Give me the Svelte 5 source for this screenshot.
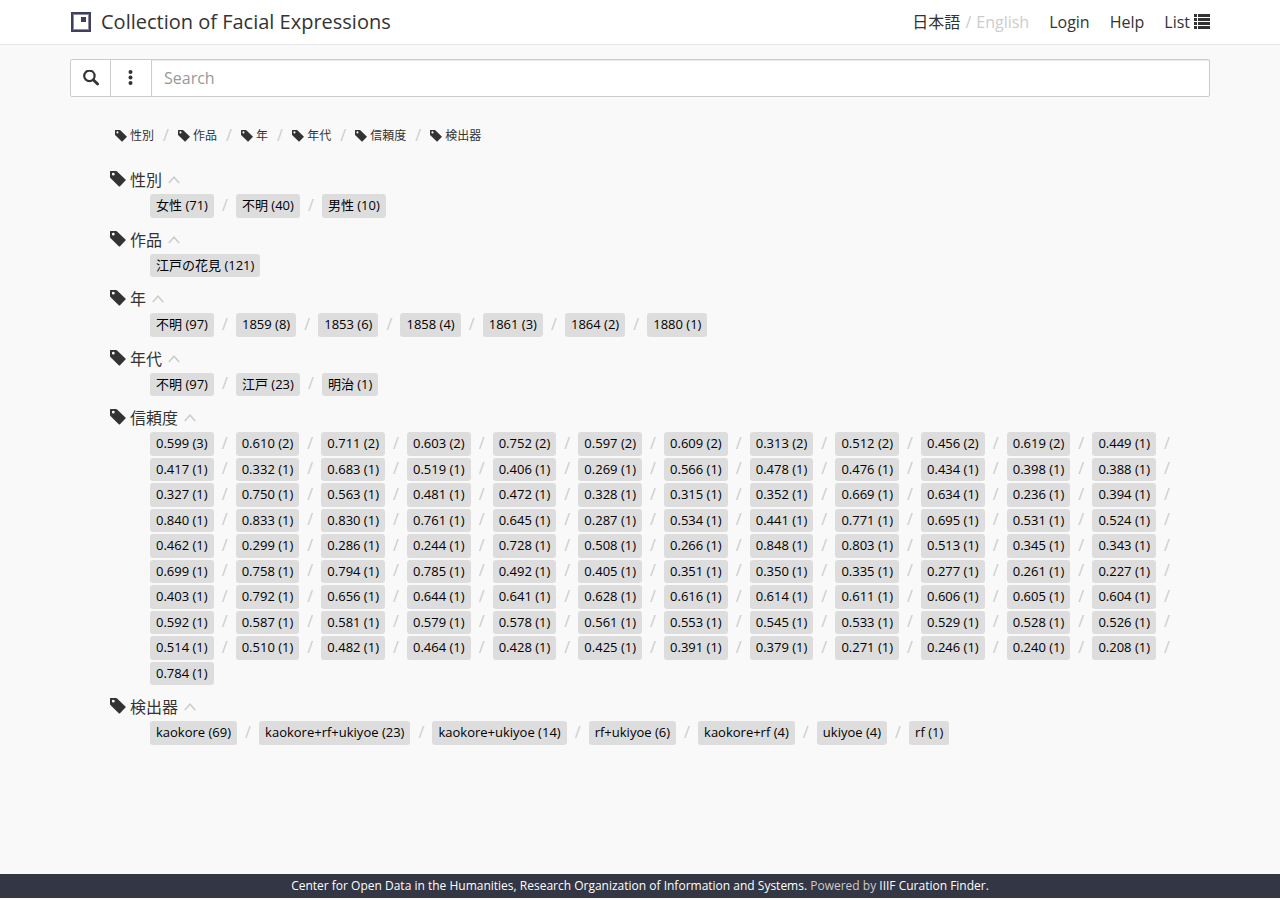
<script lang="ts">
	type Facet = { label: string; values: [string, number][] };

	let keyword = $state('');
	let closed = $state<Record<string, boolean>>({});

	const single = (list: string): [string, number][] => list.split(' ').map((value) => [value, 1]);

	const facets: Facet[] = [
		{ label: '性別', values: [['女性', 71], ['不明', 40], ['男性', 10]] },
		{ label: '作品', values: [['江戸の花見', 121]] },
		{
			label: '年',
			values: [['不明', 97], ['1859', 8], ['1853', 6], ['1858', 4], ['1861', 3], ['1864', 2], ['1880', 1]]
		},
		{ label: '年代', values: [['不明', 97], ['江戸', 23], ['明治', 1]] },
		{
			label: '信頼度',
			values: [
				['0.599', 3], ['0.610', 2], ['0.711', 2], ['0.603', 2], ['0.752', 2], ['0.597', 2],
				['0.609', 2], ['0.313', 2], ['0.512', 2], ['0.456', 2], ['0.619', 2],
				...single('0.449 0.417 0.332 0.683 0.519 0.406 0.269 0.566 0.478 0.476 0.434 0.398 0.388'),
				...single('0.327 0.750 0.563 0.481 0.472 0.328 0.315 0.352 0.669 0.634 0.236 0.394'),
				...single('0.840 0.833 0.830 0.761 0.645 0.287 0.534 0.441 0.771 0.695 0.531 0.524'),
				...single('0.462 0.299 0.286 0.244 0.728 0.508 0.266 0.848 0.803 0.513 0.345 0.343'),
				...single('0.699 0.758 0.794 0.785 0.492 0.405 0.351 0.350 0.335 0.277 0.261 0.227'),
				...single('0.403 0.792 0.656 0.644 0.641 0.628 0.616 0.614 0.611 0.606 0.605 0.604'),
				...single('0.592 0.587 0.581 0.579 0.578 0.561 0.553 0.545 0.533 0.529 0.528 0.526'),
				...single('0.514 0.510 0.482 0.464 0.428 0.425 0.391 0.379 0.271 0.246 0.240 0.208'),
				['0.784', 1]
			]
		},
		{
			label: '検出器',
			values: [
				['kaokore', 69], ['kaokore+rf+ukiyoe', 23], ['kaokore+ukiyoe', 14], ['rf+ukiyoe', 6],
				['kaokore+rf', 4], ['ukiyoe', 4], ['rf', 1]
			]
		}
	];

	function toggle(label: string) {
		closed[label] = !closed[label];
	}
</script>

{#snippet tag()}
	<svg class="tag" viewBox="0 0 16 16" aria-hidden="true">
		<path fill-rule="evenodd" d="M0 .5Q0 0 .5 0H6.2Q6.7 0 7.1 .4L15.7 8.7Q16 9 15.7 9.3L9.8 15.4Q9.4 15.8 9 15.4L.4 7Q0 6.6 0 6.1ZM3.3 1.8A1.4 1.4 0 1 0 3.3 4.6A1.4 1.4 0 1 0 3.3 1.8Z" />
	</svg>
{/snippet}

<div class="page">
	<header>
		<div class="container bar">
			<a class="brand" href="#top">
				<svg class="logo" viewBox="0 0 20 20" aria-hidden="true">
					<path fill="#8c8ca3" fill-rule="evenodd" d="M1 1H19V19H1ZM3 3V17H17V3Z" />
					<path fill="#3f3f5f" fill-rule="evenodd" d="M0 0H20V20H0ZM2 2V18H18V2ZM10 5H15V10H10Z" />
				</svg>
				<span>Collection of Facial Expressions</span>
			</a>
			<nav>
				<div class="lang">
					<a href="#ja">日本語</a>
					<span>/</span>
					<span>English</span>
				</div>
				<a href="#login">Login</a>
				<a href="#help">Help</a>
				<a class="list" href="#list">
					List
					<svg viewBox="0 0 16 16" aria-hidden="true">
						<path d="M0 0H3V3H0ZM4 0H16V3H4ZM0 4H3V7H0ZM4 4H16V7H4ZM0 8H3V11H0ZM4 8H16V11H4ZM0 12H3V15H0ZM4 12H16V15H4Z" />
					</svg>
				</a>
			</nav>
		</div>
	</header>

	<main class="container">
		<form class="search" onsubmit={(event) => event.preventDefault()}>
			<button type="submit" aria-label="Search">
				<svg viewBox="0 0 16 16" aria-hidden="true">
					<circle cx="6.4" cy="5.9" r="5.2" fill="none" stroke="#333" stroke-width="2.2" />
					<path d="M10.2 9.7L14.6 14.1" stroke="#333" stroke-width="2.8" stroke-linecap="round" />
				</svg>
			</button>
			<button type="button" aria-label="Options">
				<svg viewBox="0 0 16 16" aria-hidden="true">
					<circle cx="7.5" cy="2" r="2" />
					<circle cx="7.5" cy="7.5" r="2" />
					<circle cx="7.5" cy="13" r="2" />
				</svg>
			</button>
			<input type="text" placeholder="Search" aria-label="Search" bind:value={keyword} />
		</form>

		<ul class="crumbs">
			{#each facets as facet}
				<li><a href="#{facet.label}">{@render tag()}{facet.label}</a></li>
			{/each}
		</ul>

		{#each facets as facet}
			<section id={facet.label}>
				<h2>
					{@render tag()}
					{facet.label}
					<button type="button" class="toggle" aria-label={facet.label} onclick={() => toggle(facet.label)}>
						<svg class:down={closed[facet.label]} viewBox="0 0 12 12" aria-hidden="true">
							<path d="M.8 9L6 3.2L11.2 9" fill="none" stroke="#ccc" stroke-width="1.5" />
						</svg>
					</button>
				</h2>
				{#if !closed[facet.label]}
					<ul class="values">
						{#each facet.values as [value, count]}
							<li><button type="button" class="chip">{value} ({count})</button></li>
						{/each}
					</ul>
				{/if}
			</section>
		{/each}
	</main>

	<footer>
		<a href="#codh">Center for Open Data in the Humanities, Research Organization of Information and Systems.</a>
		Powered by <a href="#finder">IIIF Curation Finder.</a>
	</footer>
</div>

<style>
	:global(body) {
		background: #f9f9f9;
		color: #333;
		font-family: 'Open Sans', 'Noto Sans CJK JP', sans-serif;
		font-size: 16px;
		line-height: 1.5;
	}

	.page {
		box-sizing: border-box;
		min-height: 100vh;
		padding-bottom: 2px;
		display: flex;
		flex-direction: column;
	}

	.container {
		box-sizing: border-box;
		width: 100%;
		max-width: 1170px;
		margin: 0 auto;
		padding: 0 15px;
	}

	a {
		color: inherit;
		text-decoration: none;
	}

	button,
	input {
		font-family: inherit;
		color: inherit;
	}

	button {
		cursor: pointer;
	}

	svg {
		display: block;
		width: 16px;
		height: 16px;
		fill: #333;
		flex: none;
	}

	ul {
		list-style: none;
		margin: 0;
		padding: 0;
		display: flex;
		flex-wrap: wrap;
	}

	li {
		display: flex;
		align-items: center;
	}

	li:not(:last-child)::after {
		content: '/\00a0';
		color: #ccc;
		font-size: 16px;
		line-height: 16px;
		margin: 0 4px 0 8px;
		padding-bottom: 2px;
	}

	header {
		background: #fff;
		border-bottom: 1px solid #e7e7e7;
	}

	.bar {
		display: flex;
		align-items: center;
		justify-content: space-between;
		min-height: 44px;
	}

	.brand {
		display: flex;
		align-items: center;
		gap: 10px;
		padding-left: 1px;
		font-size: 20px;
		line-height: 24px;
	}

	.logo {
		width: 20px;
		height: 20px;
	}

	nav {
		display: flex;
		align-items: center;
		gap: 20px;
	}

	.lang {
		display: flex;
		gap: 5px;
		color: #ccc;
	}

	.lang a {
		color: #333;
	}

	.list {
		display: flex;
		align-items: center;
		gap: 4px;
	}

	.search {
		display: flex;
		height: 38px;
		box-sizing: border-box;
		margin: 14px 0 27px;
		background: #fff;
		border: 1px solid #ccc;
		border-radius: 2px;
	}

	.search button {
		box-sizing: border-box;
		width: 40px;
		padding: 0;
		display: grid;
		place-items: center;
		background: none;
		border: 0;
		border-right: 1px solid #ccc;
	}

	.search button + button {
		width: 41px;
	}

	.search input {
		flex: 1;
		min-width: 0;
		padding: 0 12px;
		border: 0;
		background: none;
		box-shadow: inset 0 1px 1px rgba(0, 0, 0, 0.08);
		font-size: 16px;
	}

	.search input::placeholder {
		color: #999;
	}

	.crumbs {
		padding: 0 45px;
		margin-bottom: 20px;
		font-size: 12px;
	}

	.crumbs a {
		display: flex;
		align-items: center;
		gap: 3px;
		line-height: 24px;
	}

	.crumbs .tag {
		width: 12px;
		height: 12px;
	}

	.crumbs li:not(:last-child)::after {
		margin: 0 5px 0 9px;
	}

	section {
		padding-left: 40px;
		margin-bottom: 10px;
	}

	h2 {
		display: flex;
		align-items: center;
		margin: 0 0 2px;
		font-size: 16px;
		font-weight: 400;
		line-height: 24px;
	}

	h2 .tag {
		margin: 0 4px 2px 0;
	}

	.toggle {
		margin-left: 6px;
		padding: 0;
		border: 0;
		background: none;
	}

	.toggle svg {
		width: 12px;
		height: 12px;
	}

	.down {
		transform: rotate(180deg);
	}

	.values {
		padding-left: 40px;
		row-gap: 2px;
	}

	.chip {
		padding: 2px 6px;
		border: 0;
		border-radius: 3px;
		background: #ddd;
		color: #000;
		font-size: 13px;
		line-height: 1.5;
	}

	footer {
		margin-top: auto;
		background: #333644;
		color: #ccc;
		font-size: 12px;
		line-height: 24px;
		text-align: center;
	}

	footer a {
		color: #fff;
	}
</style>
